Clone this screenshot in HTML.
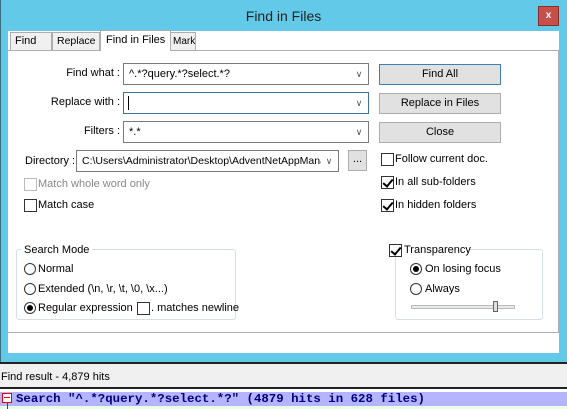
<!DOCTYPE html>
<html><head><style>
*{margin:0;padding:0;box-sizing:border-box}
body{width:567px;height:409px;overflow:hidden;background:#fff;font-family:"Liberation Sans",sans-serif;font-size:11px;color:#000;position:relative}
.a{position:absolute}
.t{position:absolute;white-space:nowrap;line-height:13px}
.cb{position:absolute;width:13px;height:13px;border:1px solid #333;background:#fff}
.cb.k::after{content:"";position:absolute;left:3px;top:0px;width:4px;height:8px;border:solid #000;border-width:0 2px 2px 0;transform:rotate(40deg)}
.rd{position:absolute;width:12px;height:12px;border:1px solid #333;border-radius:50%;background:#fff}
.rd.k::after{content:"";position:absolute;left:2px;top:2px;width:6px;height:6px;border-radius:50%;background:#000}
.cmb{position:absolute;border:1px solid #7a7a7a;background:#fff;height:22px;overflow:hidden}
.cmb span{position:absolute;left:5px;top:4px;white-space:nowrap}
.cmb i{position:absolute;right:1px;top:1px;width:16px;height:18px;text-align:center;line-height:18px;font-style:normal;color:#555;font-size:9px;background:#fff}
.btn{position:absolute;background:#e1e1e1;border:1px solid #adadad;text-align:center;line-height:19px;height:21px}
.tab{position:absolute;top:32px;height:18px;background:#f0f0f0;border:1px solid #adadad;border-bottom:none;padding-left:4px;line-height:17px;overflow:hidden;white-space:nowrap}
.r{right:447px}
</style></head><body>
<div class="a" style="left:0;top:0;width:567px;height:362px;background:#62c9e8;border-left:1px solid #3b6d80"></div>
<div class="t" style="left:0;width:567px;top:8px;text-align:center;font-size:14px;line-height:16px;color:#222">Find in Files</div>
<div class="a" style="left:538px;top:6px;width:21px;height:20px;background:#c7504a;border:1px solid #8a2e2a;color:#fff;font-size:10px;text-align:center;line-height:17px;font-weight:bold">x</div>
<div class="a" style="left:8px;top:31px;width:551px;height:322px;background:#fff"></div>
<div class="a" style="left:8px;top:50px;width:551px;height:283px;border:1px solid #adadad;border-left:none"></div>
<div class="tab" style="left:10px;width:42px">Find</div>
<div class="tab" style="left:52px;width:48px;font-size:10.5px">Replace</div>
<div class="tab" style="left:100px;top:30px;height:21px;width:71px;background:#fff;padding-left:5px;line-height:18px">Find in Files</div>
<div class="tab" style="left:170px;width:26px;padding-left:2px;font-size:10px">Mark</div>

<div class="t r" style="top:67px">Find what :</div>
<div class="cmb" style="left:123px;top:63px;width:246px"><span>^.*?query.*?select.*?</span><i>&#8744;</i></div>
<div class="t r" style="top:96px">Replace with :</div>
<div class="cmb" style="left:123px;top:92px;width:246px;border-color:#3c6f9c"><span style="left:4px;top:3px;width:1px;height:14px;background:#000"></span><i>&#8744;</i></div>
<div class="t r" style="top:125px">Filters :</div>
<div class="cmb" style="left:123px;top:121px;width:246px"><span>*.*</span><i>&#8744;</i></div>
<div class="t" style="left:25px;top:155px">Directory :</div>
<div class="cmb" style="left:76px;top:150px;width:263px"><span style="font-size:10.5px">C:\Users\Administrator\Desktop\AdventNetAppManag</span><i>&#8744;</i></div>
<div class="btn" style="left:348px;top:150px;width:19px;line-height:17px">...</div>
<div class="btn" style="left:379px;top:64px;width:122px;border-color:#3c7fb1">Find All</div>
<div class="btn" style="left:379px;top:93px;width:122px">Replace in Files</div>
<div class="btn" style="left:379px;top:122px;width:122px">Close</div>

<div class="cb" style="left:381px;top:153px"></div><div class="t" style="left:395px;top:153px">Follow current doc.</div>
<div class="cb k" style="left:381px;top:176px"></div><div class="t" style="left:395px;top:176px">In all sub-folders</div>
<div class="cb k" style="left:381px;top:199px"></div><div class="t" style="left:395px;top:199px">In hidden folders</div>
<div class="cb" style="left:24px;top:178px;border-color:#bbb"></div><div class="t" style="left:38px;top:178px;color:#888">Match whole word only</div>
<div class="cb" style="left:24px;top:199px"></div><div class="t" style="left:38px;top:199px">Match case</div>

<div class="a" style="left:16px;top:249px;width:220px;height:71px;border:1px solid #d5dfe5;border-radius:3px"></div>
<div class="t" style="left:21px;top:244px;background:#fff;padding:0 3px">Search Mode</div>
<div class="rd" style="left:24px;top:263px"></div><div class="t" style="left:38px;top:263px">Normal</div>
<div class="rd" style="left:24px;top:283px"></div><div class="t" style="left:38px;top:283px">Extended (\n, \r, \t, \0, \x...)</div>
<div class="rd k" style="left:24px;top:302px"></div><div class="t" style="left:38px;top:302px">Regular expression</div>
<div class="cb" style="left:137px;top:302px"></div><div class="t" style="left:151px;top:302px">. matches newline</div>

<div class="a" style="left:395px;top:249px;width:148px;height:71px;border:1px solid #d5dfe5;border-radius:3px"></div>
<div class="a" style="left:388px;top:243px;width:82px;height:14px;background:#fff"></div>
<div class="cb k" style="left:389px;top:244px"></div><div class="t" style="left:404px;top:244px">Transparency</div>
<div class="rd k" style="left:410px;top:263px"></div><div class="t" style="left:425px;top:263px">On losing focus</div>
<div class="rd" style="left:410px;top:283px"></div><div class="t" style="left:425px;top:283px">Always</div>
<div class="a" style="left:411px;top:305px;width:104px;height:4px;background:#e7eaea;border:1px solid #bbb"></div>
<div class="a" style="left:493px;top:301px;width:5px;height:11px;background:#e0e0e0;border:1px solid #666"></div>

<div class="a" style="left:0;top:362px;width:567px;height:2px;background:#222"></div>
<div class="a" style="left:0;top:364px;width:567px;height:23px;background:#f0f0f0"></div>
<div class="t" style="left:1px;top:371px;font-size:11px">Find result - 4,879 hits</div>
<div class="a" style="left:0;top:387px;width:567px;height:2px;background:#222"></div>
<div class="a" style="left:0;top:392px;width:567px;height:14px;background:#b4b4ff"></div>
<div class="a" style="left:0;top:406px;width:567px;height:3px;background:#e8ffe8"></div>
<div class="a" style="left:2px;top:393px;width:10px;height:10px;border:1px solid #e00;background:#fff"></div>
<div class="a" style="left:4px;top:397px;width:6px;height:1px;background:#e00"></div>
<div class="a" style="left:7px;top:403px;width:1px;height:6px;background:#e00"></div>
<div class="t" style="left:16px;top:392px;font-family:'Liberation Mono',monospace;font-weight:bold;font-size:12.4px;line-height:15px;color:#000080">Search "^.*?query.*?select.*?" (4879 hits in 628 files)</div>
</body></html>
